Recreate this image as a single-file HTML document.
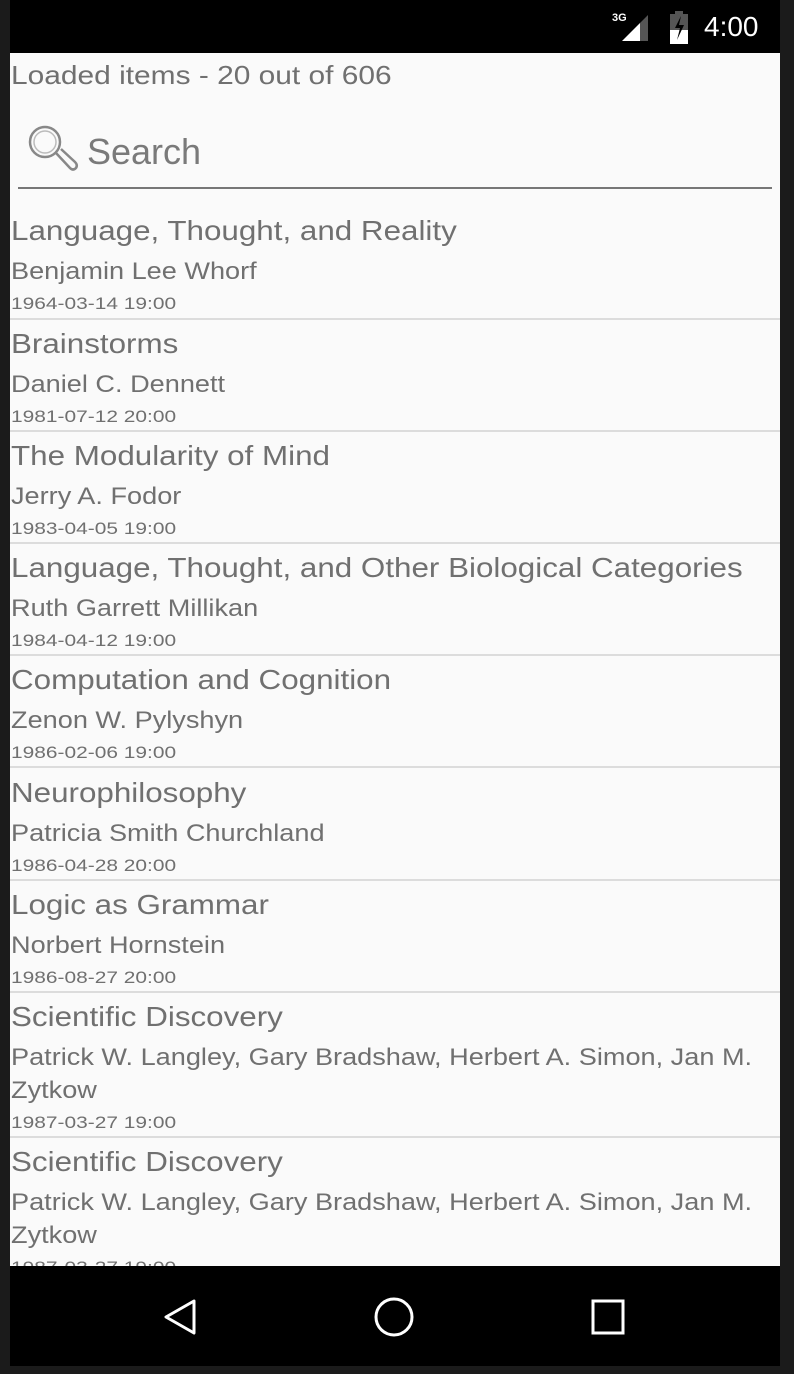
<!DOCTYPE html>
<html><head><meta charset="utf-8"><style>
body{margin:0;width:794px;height:1374px;background:#1b1b1b;overflow:hidden;font-family:"Liberation Sans",sans-serif;position:relative}
.scr{position:absolute;left:10px;top:0;width:770px;height:1366px;background:#fafafa;overflow:hidden}
.sb{position:absolute;left:0;top:0;width:770px;height:53px;background:#000}
.nav{position:absolute;left:0;top:1266px;width:770px;height:100px;background:#000}
.t{position:absolute;left:1px;white-space:nowrap;color:#707070;transform-origin:0 0}
.ti{font-size:28px;transform:scaleX(1.12);margin-top:3px}
.au{font-size:24px;transform:scaleX(1.13);margin-top:3px}
.dt{font-size:17px;transform:scaleX(1.23);margin-top:2px}
.dv{position:absolute;left:0;width:770px;height:2px;background:#dcdcdc}
</style></head><body>
<div class="scr">
<div class="sb">
<div style="position:absolute;left:602px;top:12px;color:#fff;font-size:11px;font-weight:bold">3G</div>
<svg style="position:absolute;left:610px;top:12px" width="30" height="30"><polygon points="2,29 20,11 20,29" fill="#fff"/><polygon points="20,11 28,3 28,29 20,29" fill="#555"/></svg>
<svg style="position:absolute;left:658px;top:10px" width="22" height="34"><rect x="2" y="4" width="18" height="30" fill="#555"/><rect x="7" y="1" width="8" height="4" fill="#555"/><rect x="2" y="20" width="18" height="14" fill="#fff"/><path d="M13 6 L7 18 L12 18 L9 30 L16 15 L11 15 Z" fill="#000"/></svg>
<div style="position:absolute;left:694px;top:11px;color:#fff;font-size:28px">4:00</div>
</div>
<div class="t" style="top:60px;font-size:26px;transform:scaleX(1.15)">Loaded items - 20 out of 606</div>
<svg style="position:absolute;left:16px;top:122px" width="56" height="52"><circle cx="19" cy="20" r="15" fill="none" stroke="#888" stroke-width="2.5"/><circle cx="19" cy="20" r="11" fill="none" stroke="#bbb" stroke-width="1.5"/><path d="M30 31 L44 46 Q47 49 50 46 Q52 43 49 40 L35 27" fill="none" stroke="#888" stroke-width="2.5"/></svg>
<div class="t" style="left:77px;top:131px;font-size:36px;color:#7a7a7a">Search</div>
<div style="position:absolute;left:8px;top:187px;width:754px;height:2px;background:#777"></div>

<div class="t ti" style="top:212px">Language, Thought, and Reality</div>
<div class="t au" style="top:255px">Benjamin Lee Whorf</div>
<div class="t dt" style="top:292px">1964-03-14 19:00</div>
<div class="dv" style="top:318px"></div>

<div class="t ti" style="top:325px">Brainstorms</div>
<div class="t au" style="top:368px">Daniel C. Dennett</div>
<div class="t dt" style="top:405px">1981-07-12 20:00</div>
<div class="dv" style="top:430px"></div>

<div class="t ti" style="top:437px">The Modularity of Mind</div>
<div class="t au" style="top:480px">Jerry A. Fodor</div>
<div class="t dt" style="top:517px">1983-04-05 19:00</div>
<div class="dv" style="top:542px"></div>

<div class="t ti" style="top:549px">Language, Thought, and Other Biological Categories</div>
<div class="t au" style="top:592px">Ruth Garrett Millikan</div>
<div class="t dt" style="top:629px">1984-04-12 19:00</div>
<div class="dv" style="top:654px"></div>

<div class="t ti" style="top:661px">Computation and Cognition</div>
<div class="t au" style="top:704px">Zenon W. Pylyshyn</div>
<div class="t dt" style="top:741px">1986-02-06 19:00</div>
<div class="dv" style="top:766px"></div>

<div class="t ti" style="top:774px">Neurophilosophy</div>
<div class="t au" style="top:817px">Patricia Smith Churchland</div>
<div class="t dt" style="top:854px">1986-04-28 20:00</div>
<div class="dv" style="top:879px"></div>

<div class="t ti" style="top:886px">Logic as Grammar</div>
<div class="t au" style="top:929px">Norbert Hornstein</div>
<div class="t dt" style="top:966px">1986-08-27 20:00</div>
<div class="dv" style="top:991px"></div>

<div class="t ti" style="top:998px">Scientific Discovery</div>
<div class="t au" style="top:1041px">Patrick W. Langley, Gary Bradshaw, Herbert A. Simon, Jan M.</div>
<div class="t au" style="top:1074px">Zytkow</div>
<div class="t dt" style="top:1111px">1987-03-27 19:00</div>
<div class="dv" style="top:1136px"></div>

<div class="t ti" style="top:1143px">Scientific Discovery</div>
<div class="t au" style="top:1186px">Patrick W. Langley, Gary Bradshaw, Herbert A. Simon, Jan M.</div>
<div class="t au" style="top:1219px">Zytkow</div>
<div class="t dt" style="top:1256px">1987-03-27 19:00</div>

<div class="nav">
<svg style="position:absolute;left:150px;top:30px" width="40" height="44"><path d="M34 5 L6 21 L34 37 Z" fill="none" stroke="#fff" stroke-width="3" stroke-linejoin="round"/></svg>
<svg style="position:absolute;left:362px;top:30px" width="44" height="44"><circle cx="22" cy="21" r="18" fill="none" stroke="#fff" stroke-width="3"/></svg>
<svg style="position:absolute;left:580px;top:32px" width="36" height="40"><rect x="3" y="3" width="30" height="32" fill="none" stroke="#fff" stroke-width="3"/></svg>
</div>
</div>
</body></html>
